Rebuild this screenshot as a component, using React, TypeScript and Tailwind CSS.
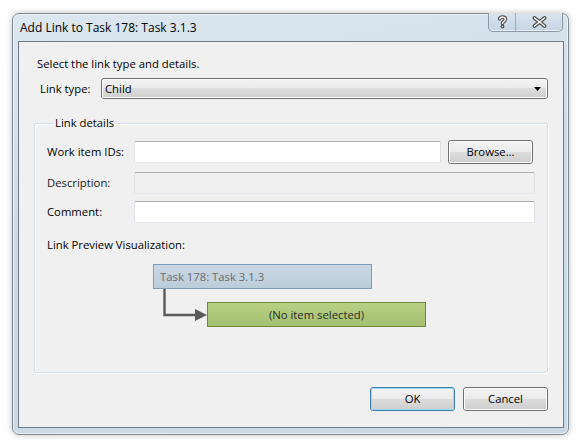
import React from "react";

const font = { fontFamily: '"Open Sans", "Noto Sans", sans-serif' };

function Btn({ children, def }: { children: React.ReactNode; def?: boolean }) {
  return (
    <div
      className={
        "relative h-[24px] w-[85px] rounded-[3px] border flex items-center justify-center text-black " +
        (def ? "border-[#3c7fb1]" : "border-[#707070]")
      }
    >
      <div
        className={
          "absolute inset-0 rounded-[2px] border " +
          (def ? "border-[#9fd8f5]" : "border-[#fbfbfb]") +
          " bg-[linear-gradient(#f2f2f2_0%,#ebebeb_49%,#dddddd_50%,#cfcfcf_100%)]"
        }
      />
      <span className="relative leading-[16px]">{children}</span>
    </div>
  );
}

function Input({ disabled, className = "" }: { disabled?: boolean; className?: string }) {
  return (
    <div
      className={
        "h-[22px] rounded-[2px] border border-t-[#abadb3] border-l-[#e2e3ea] border-r-[#dbdfe6] border-b-[#e3e9ef] " +
        (disabled ? "bg-[#f0f0f0]" : "bg-white") +
        " " +
        className
      }
    />
  );
}

export default function App() {
  return (
    <div className="w-[582px] h-[444px] bg-white pl-[12px] pt-[13px] text-black" style={font}>
      <div className="w-[557px] h-[422px] rounded-[7px] border border-[#7d8a96] bg-[linear-gradient(170deg,#dce7f0_0%,#cfdce7_40%,#c9d8e4_100%)] shadow-[0_0_6px_rgba(0,0,0,0.25),inset_0_0_0_1px_rgba(255,255,255,0.55)] flex flex-col">
        {/* title bar */}
        <div className="h-[27px] flex items-start shrink-0">
          <div className="pl-[7px] h-[27px] flex items-center text-[12px] leading-[16px] text-black">
            Add Link to Task 178: Task 3.1.3
          </div>
          <div className="ml-auto mr-[5px] flex h-[19px] -mt-px rounded-b-[5px] border border-t-0 border-[#8c9aa7] bg-[linear-gradient(#d9e4ee,#c6d5e2)] shadow-[inset_0_-1px_0_rgba(255,255,255,0.6)]">
            <div className="w-[27px] flex items-center justify-center border-r border-[#9eacb8]">
              <svg width="11" height="14" viewBox="0 0 11 14">
                <path
                  d="M2.6 4 C2.6 1.4 8.4 1.4 8.4 4.2 C8.4 6.2 5.5 6.4 5.5 8.6"
                  fill="none"
                  stroke="#4a4a4a"
                  strokeWidth="3.6"
                  strokeLinecap="round"
                />
                <circle cx="5.5" cy="11.6" r="1.9" fill="#4a4a4a" />
                <path
                  d="M2.6 4 C2.6 1.4 8.4 1.4 8.4 4.2 C8.4 6.2 5.5 6.4 5.5 8.6"
                  fill="none"
                  stroke="#ffffff"
                  strokeWidth="1.4"
                  strokeLinecap="round"
                />
                <circle cx="5.5" cy="11.6" r="0.8" fill="#fff" />
              </svg>
            </div>
            <div className="w-[46px] flex items-center justify-center">
              <svg width="15" height="12" viewBox="0 0 15 12">
                <path d="M2.5 2 L12.5 10 M12.5 2 L2.5 10" stroke="#4a4a4a" strokeWidth="3.8" strokeLinecap="round" />
                <path d="M2.5 2 L12.5 10 M12.5 2 L2.5 10" stroke="#ffffff" strokeWidth="1.5" strokeLinecap="round" />
              </svg>
            </div>
          </div>
        </div>

        {/* client area */}
        <div className="ml-[5px] mr-[4px] mb-[6px] flex-1 border border-[#6f7c88] bg-[#f0f0f0] px-[15px] pb-[15px] flex flex-col text-[11.3px] leading-[16px]">
          <div className="mt-[14px] ml-[3px]">Select the link type and details.</div>

          <div className="mt-[6px] flex items-center h-[21px]">
            <div className="ml-[6px] w-[61px]">Link type:</div>
            <div className="relative flex-1 h-[21px] rounded-[3px] border border-[#707070] flex items-center">
              <div className="absolute inset-0 rounded-[2px] border border-[#fbfbfb] bg-[linear-gradient(#f2f2f2_0%,#ebebeb_49%,#dddddd_50%,#cfcfcf_100%)]" />
              <span className="relative pl-[3px]">Child</span>
              <svg className="relative ml-auto mr-[6px]" width="7" height="4" viewBox="0 0 7 4">
                <path d="M0 0 H7 L3.5 4 Z" fill="#000" />
              </svg>
            </div>
          </div>

          <fieldset className="mt-[16px] rounded-[3px] border border-[#d5dfe5] shadow-[inset_1px_1px_0_#fff,1px_1px_0_#fff] pl-[12px] pr-[12px] pt-[9px] pb-[45px]">
            <legend className="ml-[6px] px-[2px] leading-[16px]">Link details</legend>

            <div className="flex items-center h-[24px]">
              <div className="w-[87px]">Work item IDs:</div>
              <Input className="w-[307px]" />
              <div className="ml-[7px]">
                <Btn>Browse...</Btn>
              </div>
            </div>

            <div className="mt-[8px] flex items-center h-[22px]">
              <div className="w-[87px] text-[#1a1a1a]">Description:</div>
              <Input disabled className="flex-1" />
            </div>

            <div className="mt-[7px] flex items-center h-[22px]">
              <div className="w-[87px]">Comment:</div>
              <Input className="flex-1" />
            </div>

            <div className="mt-[14px]">Link Preview Visualization:</div>

            <div className="relative mt-[11px]">
              <div className="ml-[106px] w-[219px] h-[25px] border border-[#7c9dbd] bg-[linear-gradient(#c8d7e3,#bccdda)] flex items-center pl-[6px] text-[#6b6b6b]">
                Task 178: Task 3.1.3
              </div>
              <div className="mt-[13px] ml-[160px] w-[219px] h-[25px] border border-[#6b8a3a] bg-[linear-gradient(#b7d083,#a5bf70)] flex items-center justify-center text-[#2a2a2a]">
                (No item selected)
              </div>
              <svg
                className="absolute left-[116px] top-[25px]"
                width="46"
                height="34"
                viewBox="0 0 46 34"
              >
                <path d="M1.5 0 V26 H36" fill="none" stroke="#595959" strokeWidth="2.4" />
                <path d="M32 20 L44 26 L32 32 Z" fill="#595959" />
              </svg>
            </div>
          </fieldset>

          <div className="mt-[14px] flex justify-end gap-[8px]">
            <Btn def>OK</Btn>
            <Btn>Cancel</Btn>
          </div>
        </div>
      </div>
    </div>
  );
}
